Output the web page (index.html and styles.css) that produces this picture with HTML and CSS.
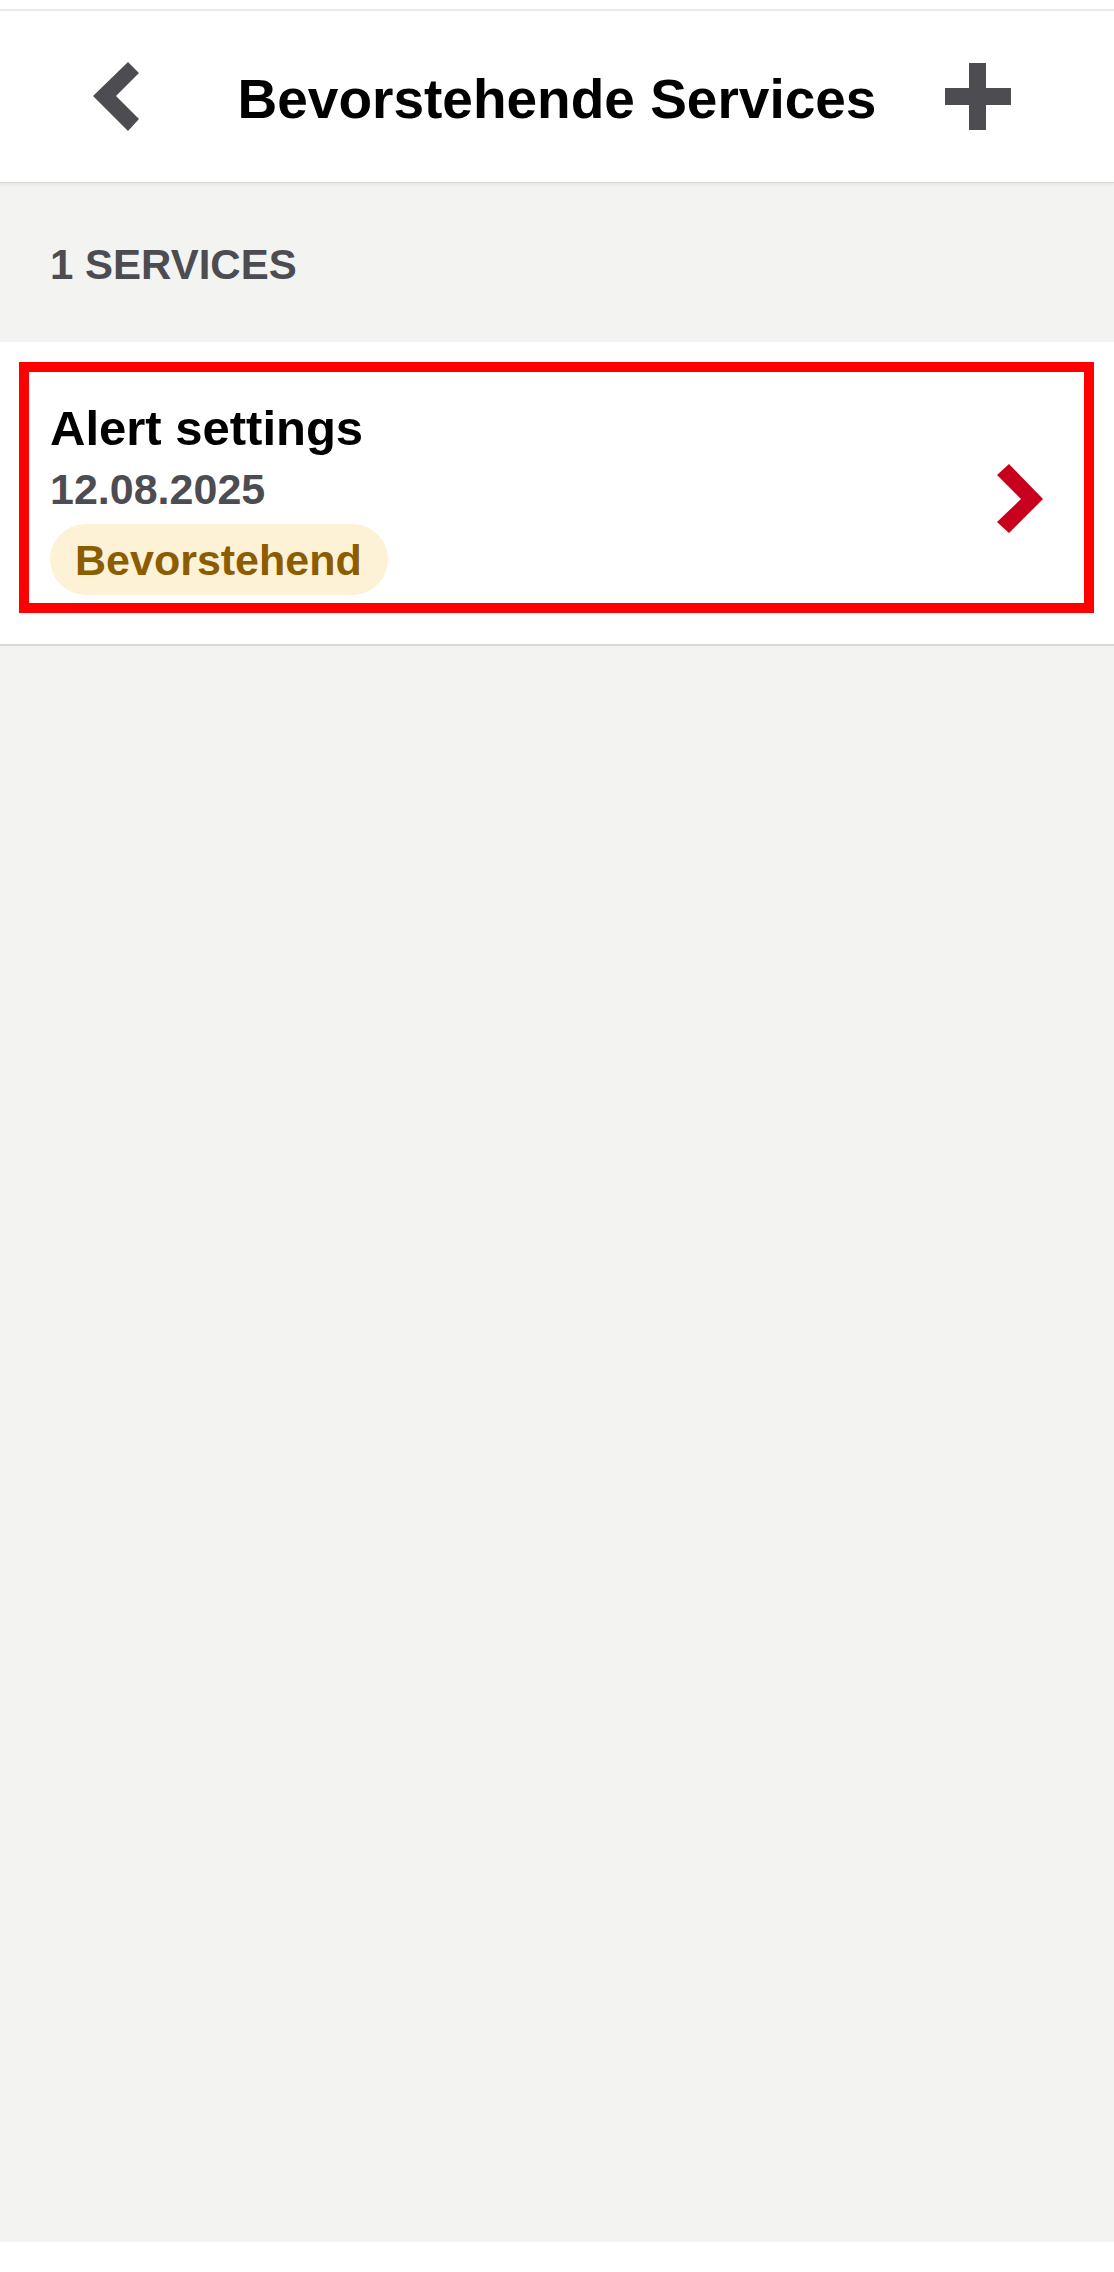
FILE: index.html
```html
<!DOCTYPE html>
<html lang="de">
<head>
    <meta charset="UTF-8">
    <meta name="viewport" content="width=device-width, initial-scale=1.0">
    <title>Bevorstehende Services</title>
    <link rel="stylesheet" href="styles.css">
</head>
<body>
    <div class="page">
        <div class="status-bar"></div>

        <!-- Top navigation -->
        <header class="nav-bar">
            <div class="nav-left">
                <svg class="icon-back" width="48" height="72" viewBox="0 0 48 72">
                    <polygon points="36,1 47,12 24,35 47,58 36,70 1,35" />
                </svg>
            </div>
            <h1 class="nav-title">Bevorstehende Services</h1>
            <div class="nav-right">
                <svg class="icon-add" width="66" height="67" viewBox="0 0 66 67">
                    <rect x="24" y="0" width="17" height="67" />
                    <rect x="0" y="25" width="66" height="17" />
                </svg>
            </div>
        </header>

        <div class="section-label">1 SERVICES</div>

        <!-- Service list -->
        <div class="service-list">
            <div class="service-item">
                <div class="service-info">
                    <div class="service-name">Alert settings</div>
                    <div class="service-date">12.08.2025</div>
                    <span class="status-badge">Bevorstehend</span>
                </div>
                <svg class="icon-next" width="48" height="72" viewBox="0 0 48 72">
                    <polygon points="13,1 1,12 25,36 1,59 13,70 47,36" />
                </svg>
            </div>
        </div>

        <div class="filler"></div>
        <div class="home-strip"></div>
    </div>
</body>
</html>
```

FILE: styles.css
```css
* {
    box-sizing: border-box;
}

body {
    margin: 0;
    font-family: "Liberation Sans", Arial, Helvetica, sans-serif;
    background-color: #f3f3f1;
}

.page {
    display: flex;
    flex-direction: column;
    min-height: 100vh;
}

.status-bar {
    height: 11px;
    background: white;
    border-bottom: 2px solid #ebebeb;
}

.nav-bar {
    display: grid;
    grid-template-columns: 1fr auto 1fr;
    align-items: center;
    height: 172px;
    background: white;
    border-bottom: 1px solid #d8d8d8;
    box-shadow: 0px 2px 3px rgba(0, 0, 0, 0.06);
    position: relative;
    z-index: 1;
}

.nav-left {
    display: flex;
    padding-left: 92px;
}

.nav-right {
    display: flex;
    justify-content: flex-end;
    padding-right: 103px;
}

.icon-back,
.icon-add {
    fill: #4d4c51;
    display: block;
}

.nav-title {
    margin: 4px 0 0 0;
    font-size: 55px;
    line-height: 64px;
    font-weight: bold;
    color: #000;
}

.section-label {
    padding: 57px 50px 52px;
    font-size: 42px;
    line-height: 50px;
    font-weight: bold;
    color: #4d4c51;
}

.service-list {
    background: white;
    padding: 20px 20px 31px 19px;
    border-bottom: 2px solid #d9d9d9;
}

.service-item {
    display: flex;
    align-items: center;
    border: 10px solid #ff0000;
    padding: 28px 40px 8px 21px;
}

.service-info {
    flex: 1;
    display: flex;
    flex-direction: column;
    align-items: flex-start;
}

.service-name {
    font-size: 49px;
    line-height: 56px;
    font-weight: bold;
    color: #000;
}

.service-date {
    margin-top: 9px;
    font-size: 43px;
    line-height: 48px;
    font-weight: bold;
    color: #4d4c51;
}

.status-badge {
    margin-top: 11px;
    padding: 15px 26px 13px 25px;
    font-size: 43px;
    line-height: 43px;
    font-weight: bold;
    color: #8b5c00;
    background-color: #fdf2d6;
    border-radius: 36px;
}

.icon-next {
    fill: #c8001e;
    display: block;
    margin-top: 2px;
}

.filler {
    flex: 1;
}

.home-strip {
    height: 30px;
    background: white;
}
```
